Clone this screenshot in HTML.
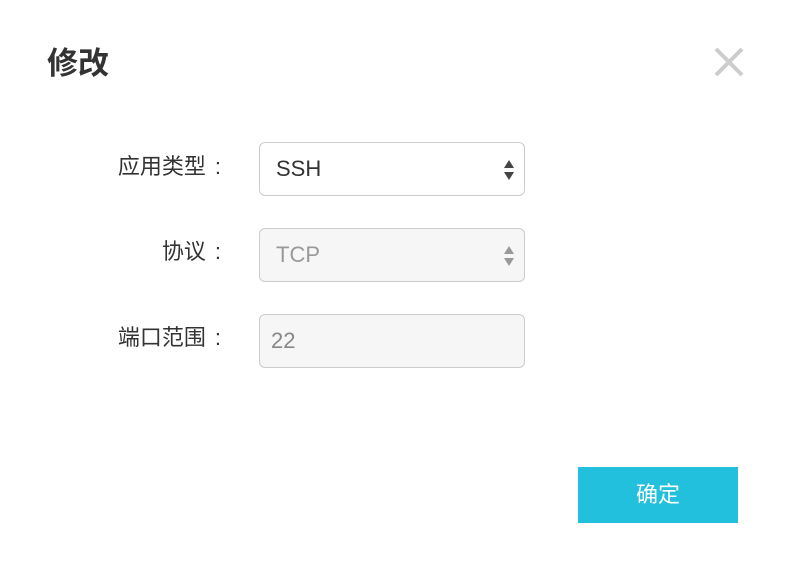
<!DOCTYPE html>
<html><head><meta charset="utf-8"><style>
body{margin:0;width:794px;height:578px;background:#fff;font-family:"Liberation Sans","Noto Sans CJK SC",sans-serif;position:relative;overflow:hidden}
.t{position:absolute;left:47px;top:42px;font-size:31px;font-weight:bold;color:#333;line-height:44px}
.x{position:absolute;left:713px;top:46px}
.l{position:absolute;right:573px;font-size:22px;color:#333;line-height:30px;white-space:nowrap}
.l i{font-style:normal;margin-left:9px}
.b{position:absolute;left:259px;width:264px;height:52px;border:1px solid #ccc;border-radius:6px;box-sizing:content-box;font-size:22px;line-height:52px}
.b span{position:absolute;left:16px}
.ar{position:absolute;right:9px;top:16px}
.btn{position:absolute;left:578px;top:467px;width:160px;height:56px;background:#22c0dd;color:#fff;font-size:22px;line-height:56px;text-align:center}
</style></head><body>
<div class="t">修改</div>
<svg class="x" width="32" height="32" viewBox="0 0 32 32"><path d="M3 3L29 29M29 3L3 29" stroke="#ccc" stroke-width="4"/></svg>
<div class="l" style="top:152px">应用类型<i>:</i></div>
<div class="b" style="top:142px;background:#fff;color:#333"><span>SSH</span>
<svg class="ar" width="12" height="22" viewBox="0 0 12 22"><path d="M6 1L11 9H1Z M6 21L11 13H1Z" fill="#444"/></svg></div>
<div class="l" style="top:237px">协议<i>:</i></div>
<div class="b" style="top:228px;background:#f5f6f5;color:#999"><span>TCP</span>
<svg class="ar" width="12" height="22" viewBox="0 0 12 22"><path d="M6 1L11 9H1Z M6 21L11 13H1Z" fill="#999"/></svg></div>
<div class="l" style="top:323px">端口范围<i>:</i></div>
<div class="b" style="top:314px;background:#f5f6f5;color:#888"><span style="left:11px">22</span></div>
<div class="btn">确定</div>
</body></html>
